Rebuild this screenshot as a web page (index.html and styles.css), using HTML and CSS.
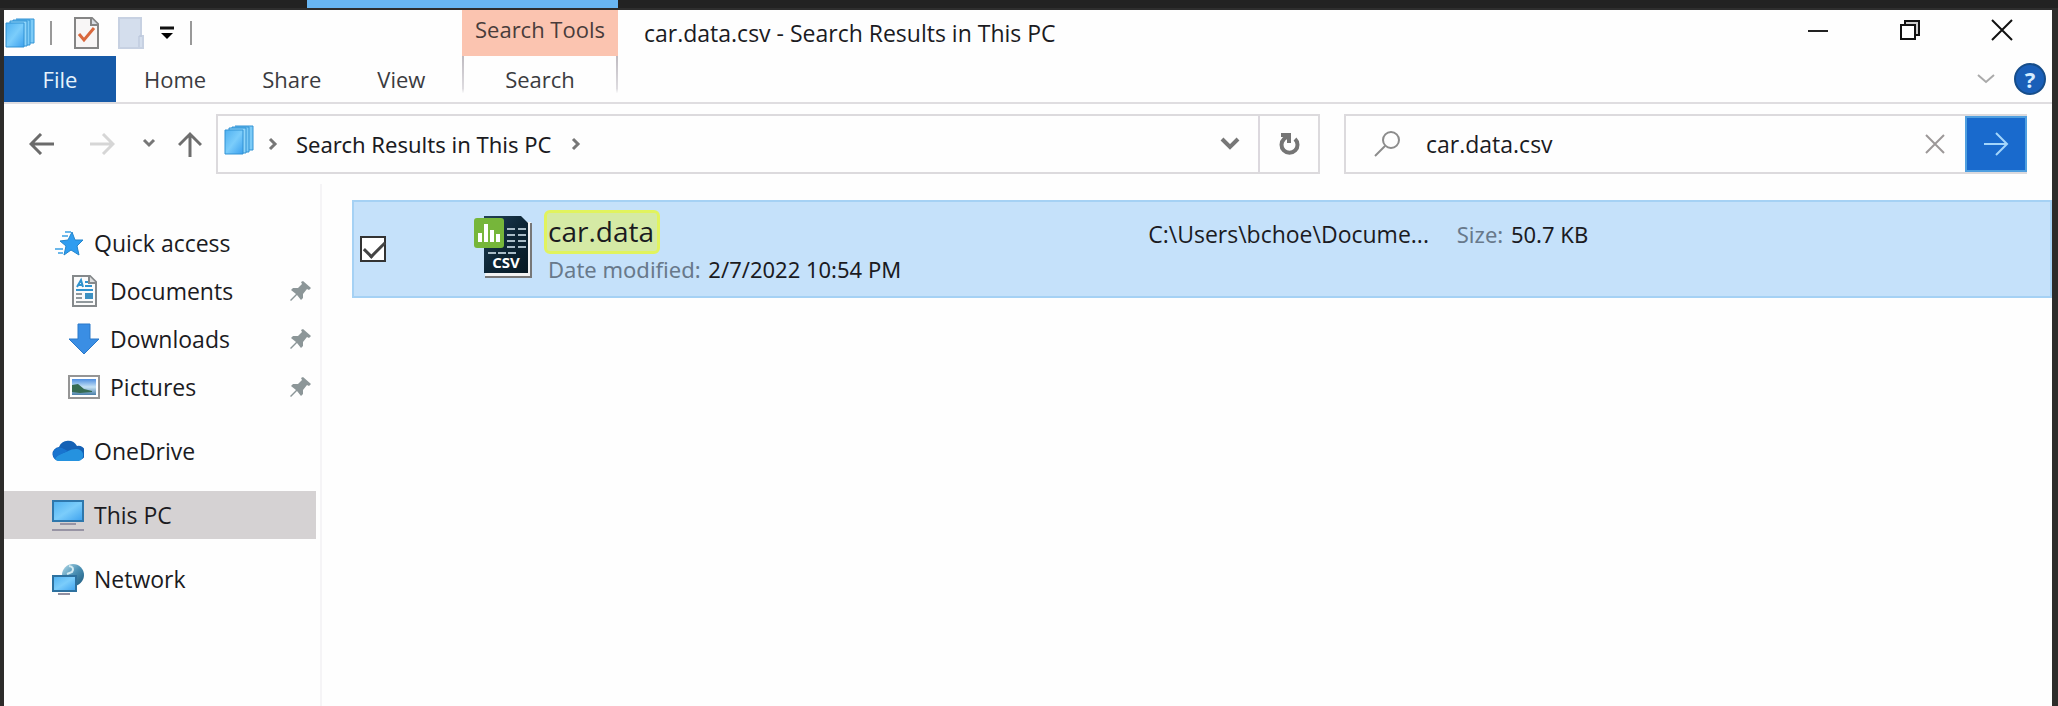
FILE: index.html
```html
<!DOCTYPE html>
<html lang="en">
<head>
<meta charset="utf-8">
<title>car.data.csv - Search Results in This PC</title>
<link rel="stylesheet" href="styles.css">
</head>
<body>
<svg class="defs" aria-hidden="true">
  <defs>
    <linearGradient id="sky" x1="0" y1="0" x2="1" y2="1"><stop offset="0" stop-color="#4fb0f0"/><stop offset=".5" stop-color="#7bcdfb"/><stop offset="1" stop-color="#3ba0ee"/></linearGradient>
    <linearGradient id="dark" x1="0" y1="0" x2="1" y2="1"><stop offset="0" stop-color="#21415a"/><stop offset=".5" stop-color="#0d2636"/><stop offset="1" stop-color="#071923"/></linearGradient>
    <linearGradient id="globe" x1="0" y1="0" x2="1" y2="1"><stop offset="0" stop-color="#b5dcea"/><stop offset=".5" stop-color="#4a90b4"/><stop offset="1" stop-color="#1c587c"/></linearGradient>
    <linearGradient id="photo" x1="0" y1="0" x2="0" y2="1"><stop offset="0" stop-color="#4d8ee0"/><stop offset=".5" stop-color="#c5e2f5"/><stop offset="1" stop-color="#4a7fa8"/></linearGradient>
    <symbol id="stack" viewBox="0 0 30 30">
      <path d="M11 1h18v24h-5" fill="#7ccbf7" stroke="#3393d4"/><path d="M8 2h17v25H8z" fill="#7ccbf7" stroke="#3393d4"/><path d="M5 3h17v25H5z" fill="#8fd5fa" stroke="#3393d4"/><path d="M1 5h18v24H1z" fill="url(#sky)" stroke="#3393d4"/>
    </symbol>
    <symbol id="pin" viewBox="0 0 22 22">
      <path d="M13 1l8 7-2 2-2-1-4 5v4l-2 2-4-5-6 6-1-1 6-6-5-4 2-2h5l4-4-1-2z" fill="#8c9698"/>
    </symbol>
  </defs>
</svg>
<div class="backdrop"><div class="backdrop-tab"></div></div>
<div class="window">
  <header class="ribbon">
    <div class="quick">
      <svg class="stack" width="30" height="30"><use href="#stack"/></svg>
      <span class="bar"></span>
      <button class="plain" aria-label="Properties"><svg width="25" height="32" viewBox="0 0 25 32"><path d="M1 1h17l6 6v24H1z" fill="#f8f6f6" stroke="#858585" stroke-width="2"/><path d="M17 1v7h7" fill="#d9dde4" stroke="#858585" stroke-width="2"/><path d="M5 17l5 6 10-12" fill="none" stroke="#d9683d" stroke-width="3"/></svg></button>
      <button class="plain page" aria-label="New folder"><svg width="26" height="32" viewBox="0 0 26 32"><path d="M1 1h22v18h2v12H1z" fill="#d4deed" stroke="#c7d1e2" stroke-width="2"/><path d="M21 30V19h3" fill="none" stroke="#b7c3d8"/></svg></button>
      <button class="plain" aria-label="Customize Quick Access Toolbar"><svg width="16" height="14" viewBox="0 0 16 14"><path d="M1 2h14" stroke="#111" stroke-width="3"/><path d="M2 7h12l-6 6z" fill="#000"/></svg></button>
      <span class="bar"></span>
    </div>
    <div class="context">Search Tools</div>
    <div class="titlebar">
      <h1>car.data.csv - Search Results in This PC</h1>
      <div class="controls">
        <button class="plain" aria-label="Minimize"><svg width="22" height="22" viewBox="0 0 22 22"><path d="M1 12h20" stroke="#222" stroke-width="2"/></svg></button>
        <button class="plain" aria-label="Restore"><svg width="22" height="22" viewBox="0 0 22 22" fill="none" stroke="#111" stroke-width="2"><path d="M6 6V2h14v14h-4" fill="#ccc"/><path d="M2 6h14v14H2z" fill="#fff"/></svg></button>
        <button class="plain" aria-label="Close"><svg width="22" height="22" viewBox="0 0 22 22"><path d="M1 1l20 20M21 1L1 21" stroke="#111" stroke-width="2"/></svg></button>
      </div>
    </div>
    <nav class="tabs" aria-label="Ribbon">
      <button class="tab file">File</button><button class="tab">Home</button><button class="tab">Share</button><button class="tab">View</button>
    </nav>
    <button class="tab search-tab">Search</button>
    <div class="ribbon-end">
      <button class="plain" aria-label="Expand the Ribbon"><svg width="18" height="12" viewBox="0 0 18 12"><path d="M1 2l8 7 8-7" fill="none" stroke="#aaa" stroke-width="2"/></svg></button>
      <button class="help" aria-label="Help">?</button>
    </div>
  </header>

  <div class="navbar">
    <button class="plain" aria-label="Back"><svg width="26" height="22" viewBox="0 0 26 22"><path d="M25 11H3M12 1L2 11l10 10" fill="none" stroke="#6b6b6b" stroke-width="3"/></svg></button>
    <button class="plain" aria-label="Forward"><svg width="26" height="22" viewBox="0 0 26 22"><path d="M1 11h22M14 1l10 10-10 10" fill="none" stroke="#d6d6d6" stroke-width="3"/></svg></button>
    <button class="plain recent" aria-label="Recent locations"><svg width="14" height="10" viewBox="0 0 14 10"><path d="M2 2l5 5 5-5" fill="none" stroke="#777" stroke-width="3"/></svg></button>
    <button class="plain up" aria-label="Up"><svg width="24" height="26" viewBox="0 0 24 26"><path d="M12 26V4M1 14L12 3l11 11" fill="none" stroke="#6e6e6e" stroke-width="3"/></svg></button>
    <div class="address">
      <svg class="stack" width="30" height="30"><use href="#stack"/></svg>
      <svg class="crumb-arrow" width="10" height="14" viewBox="0 0 10 14"><path d="M2 2l5 5-5 5" fill="none" stroke="#777" stroke-width="3"/></svg>
      <a class="crumb" href="#results">Search Results in This PC</a>
      <svg class="crumb-end" width="10" height="14" viewBox="0 0 10 14"><path d="M2 2l5 5-5 5" fill="none" stroke="#777" stroke-width="3"/></svg>
      <button class="plain history" aria-label="Previous locations"><svg width="20" height="14" viewBox="0 0 20 14"><path d="M2 2l8 8 8-8" fill="none" stroke="#777" stroke-width="4"/></svg></button>
      <button class="plain refresh" aria-label="Refresh"><svg width="22" height="24" viewBox="0 0 22 24"><path d="M17 7a8 8 0 1 1-11 0l4-3" fill="none" stroke="#757575" stroke-width="4"/><path d="M3 3h8v8" fill="none" stroke="#757575" stroke-width="4"/></svg></button>
    </div>
    <form class="search">
      <svg width="26" height="26" viewBox="0 0 26 26" fill="none" stroke="#8c8c8c" stroke-width="2"><circle cx="17" cy="9" r="8"/><path d="M11 15L1 25"/></svg>
      <input type="text" value="car.data.csv" aria-label="Search">
      <button type="reset" class="plain clear" aria-label="Clear"><svg width="20" height="20" viewBox="0 0 20 20"><path d="M1 1l18 18M19 1L1 19" stroke="#9c9898" stroke-width="2"/></svg></button>
      <button type="button" class="go" aria-label="Go"><svg width="26" height="24" viewBox="0 0 26 24"><path d="M1 12h22M13 1l11 11-11 11" fill="none" stroke="#a3d5fb" stroke-width="2"/></svg></button>
    </form>
  </div>

  <div class="body">
    <nav class="sidebar" aria-label="Navigation pane">
      <a href="#quick"><svg width="32" height="32" viewBox="0 0 32 32"><path d="M20 5l3 8h8l-6 6 2 9-8-5-7 5 2-9-6-5 8-1z" fill="#2f9df0" stroke="#2385cc"/><path d="M13 5h6M10 9h6M3 22h8M6 26h5" stroke="#6bb7ea" stroke-width="2"/></svg>Quick access</a>
      <a class="sub" href="#documents"><svg width="32" height="32" viewBox="0 0 32 32"><path d="M5 1h17l6 6v24H5z" fill="#fbfbfb" stroke="#85898b" stroke-width="2"/><path d="M21 1v7h7" fill="#ddd" stroke="#85898b" stroke-width="2"/><path d="M9 12l4-7 2 7M10 10h4M17 7h3M17 11h7M8 15h17" fill="none" stroke="#3193ce" stroke-width="2"/><path d="M8 19h6M8 23h6M8 27h17" stroke="#91999d" stroke-width="2"/><path d="M17 18h8v6h-8z" fill="#3d91c2"/></svg>Documents<svg class="pin" width="22" height="22"><use href="#pin"/></svg></a>
      <a class="sub" href="#downloads"><svg width="32" height="32" viewBox="0 0 32 32"><path d="M10 1h12v15h9L16 31 1 16h9z" fill="#3a8ee4" stroke="#2a78c9"/></svg>Downloads<svg class="pin" width="22" height="22"><use href="#pin"/></svg></a>
      <a class="sub" href="#pictures"><svg width="32" height="32" viewBox="0 0 32 32"><path d="M1 5h30v22H1z" fill="#fff" stroke="#959595" stroke-width="2"/><path d="M4 8h24v16H4z" fill="url(#photo)"/><path d="M4 14l6-1 6 5 8 2v1l-12 1-8-1z" fill="#366b52"/></svg>Pictures<svg class="pin" width="22" height="22"><use href="#pin"/></svg></a>
      <a class="root" href="#onedrive"><svg width="32" height="32" viewBox="0 0 32 32"><path d="M8 26a7 7 0 0 1-1-14 10 10 0 0 1 18-1 7 7 0 0 1 3 14z" fill="#1461b5"/><path d="M3 24c2-5 7-5 13-8 4-2 9-3 12-1a6 6 0 0 1-1 11H8q-4 0-5-2z" fill="#2592df"/><path d="M1 18a7 7 0 0 1 9-5l6 3C10 19 5 20 3 24q-2-2-2-6z" fill="#1874cf"/></svg>OneDrive</a>
      <a class="root selected" href="#pc" aria-current="page"><svg width="32" height="32" viewBox="0 0 32 32"><path d="M1 2h30v20H1z" fill="url(#sky)" stroke="#2e77ac" stroke-width="2"/><path d="M8 25h16M0 31h32" stroke="#9894a4" stroke-width="2"/></svg>This PC</a>
      <a class="root" href="#network"><svg width="32" height="32" viewBox="0 0 32 32"><circle cx="21" cy="12" r="11" fill="url(#globe)"/><path d="M17 3q6 1 3 6l-5 2" stroke="#d3ebf2" stroke-width="2" fill="none"/><path d="M1 13h23v15H1z" fill="url(#sky)" stroke="#2d719f" stroke-width="2"/><path d="M6 31h12" stroke="#918fa0" stroke-width="2"/></svg>Network</a>
    </nav>
    <main class="results" id="results">
      <div class="item">
        <input type="checkbox" class="check" checked aria-label="Select car.data">
        <svg class="csv" width="60" height="64" viewBox="0 0 60 64"><path d="M16 7h42v55H12" fill="#f3f3f3"/><path d="M58 8v54H12" fill="none" stroke="#777" stroke-width="2"/><path d="M11 1h37l7 7v50H11z" fill="url(#dark)"/><path d="M34 14h8M45 14h8M34 20h8M45 20h8M34 26h8M45 26h8M34 32h8M45 32h8M15 38h8M25 38h8M35 38h8" stroke="#a9bcc7" stroke-width="2"/><rect x="1" y="3" width="30" height="30" rx="3" fill="#76b63a"/><path d="M7 27v-9M13 27V9M19 27V15M25 27v-8" stroke="#fff" stroke-width="4"/><text x="33" y="53" text-anchor="middle" class="csv-label">CSV</text></svg>
        <div class="info">
          <div class="name"><mark>car.data</mark></div>
          <div><span class="label">Date modified:</span> 2/7/2022 10:54 PM</div>
        </div>
        <div class="path">C:\Users\bchoe\Docume...</div>
        <div class="size"><span class="label">Size:</span> 50.7 KB</div>
      </div>
    </main>
  </div>
</div>
</body>
</html>
```

FILE: styles.css
```css
* { box-sizing: border-box; }
body {
  margin: 0;
  min-height: 100vh;
  display: flex;
  flex-direction: column;
  background: #2d2c2a;
  color: #1b1b1f;
  font: 22px/32px "Noto Sans", "Open Sans", sans-serif;
}
button, input { font: inherit; color: inherit; }
svg { display: block; flex: none; }
.defs { position: absolute; width: 0; height: 0; }
.plain {
  display: flex;
  align-items: center;
  justify-content: center;
  border: 0;
  padding: 0;
  background: none;
}
.backdrop { height: 10px; background: #222; border-bottom: 2px solid #2e2e2e; }
.backdrop-tab { width: 311px; height: 8px; margin-left: 307px; background: #68b6f3; }
.window {
  flex: 1;
  display: flex;
  flex-direction: column;
  margin: 0 6px 0 4px;
  background: #fefefe;
}

.ribbon {
  display: grid;
  grid-template-columns: 458px 156px 1fr;
  grid-template-rows: 46px 46px;
  border-bottom: 2px solid #dfdde0;
}
.quick { display: flex; align-items: center; padding-left: 1px; }
.quick .stack { margin-right: 15px; }
.bar { width: 2px; height: 24px; margin-right: 22px; background: #999; }
.quick .page { margin: 0 15px 0 19px; }
.quick .plain + .bar { margin-left: 15px; }
.context {
  display: flex;
  justify-content: center;
  align-items: center;
  padding-bottom: 8px;
  background: #fbc4b0;
  color: #493c3b;
  font-family: "Open Sans", "Noto Sans", sans-serif;
}
.titlebar { display: flex; justify-content: space-between; padding: 0 4px 0 26px; }
h1 { margin: 0; font: 23px/46px "Open Sans", "Noto Sans", sans-serif; }
.controls { display: flex; }
.controls .plain { width: 92px; height: 40px; }
.tabs { display: flex; }
.tab {
  border: 0;
  padding: 0 28px;
  background: none;
  color: #3b3b40;
  font-family: "Open Sans", "Noto Sans", sans-serif;
}
.file { width: 112px; background: #165aa8; color: #e6f3fc; }
.search-tab {
  border: solid;
  border-width: 0 2px;
  border-image: linear-gradient(#bdb9bf, #dedce0 70%, transparent 80%) 1;
}
.ribbon-end { display: flex; justify-content: flex-end; align-items: center; gap: 19px; padding-right: 6px; }
.help {
  width: 32px;
  height: 32px;
  border: 2px solid #164d8a;
  border-radius: 50%;
  padding: 0;
  background: #1a5fb8;
  color: #d5ecff;
  font-weight: 700;
  line-height: 28px;
}

.navbar {
  display: grid;
  grid-template-columns: 60px 60px 34px 50px minmax(0, 1128fr) minmax(0, 683fr);
  height: 80px;
  padding: 10px 25px 10px 8px;
}
.recent { padding-bottom: 2px; }
.up { padding-right: 2px; }
.address, .search { display: flex; align-items: center; border: 2px solid #dcdadd; }
.address { margin-right: 24px; padding-left: 6px; }
.address .stack { margin-bottom: 8px; }
.crumb-arrow { margin: 0 18px 0 14px; }
.crumb { color: inherit; text-decoration: none; }
.crumb-end { margin-left: 20px; }
.history { margin-left: auto; width: 56px; height: 100%; }
.refresh { width: 60px; height: 100%; border-left: 2px solid #dcd8de; }
.search { padding-left: 28px; border-right: 0; }
.search input {
  flex: 1;
  min-width: 0;
  margin-left: 26px;
  border: 0;
  padding: 0;
  outline: 0;
  background: none;
  font: 23px/32px "Open Sans", "Noto Sans", sans-serif;
}
.clear { width: 60px; height: 100%; }
.go {
  display: flex;
  align-items: center;
  justify-content: center;
  align-self: stretch;
  width: 62px;
  border: 2px solid #4f9fe0;
  padding: 0;
  background: #196acd;
}

.body { flex: 1; display: flex; }
.sidebar {
  width: 318px;
  padding: 35px 4px 35px 0;
  border-right: 2px solid #f5f4f6;
  font: 23px/32px "Open Sans", "Noto Sans", sans-serif;
}
.sidebar a {
  display: flex;
  align-items: center;
  gap: 10px;
  height: 48px;
  padding-left: 48px;
  color: inherit;
  text-decoration: none;
}
.sidebar .sub { padding: 0 4px 0 64px; }
.sidebar .root { margin-top: 16px; }
.sidebar .selected { background: #d5d2d3; }
.pin { margin-left: auto; }
.results { flex: 1; padding: 16px 0 0 30px; }
.item {
  display: grid;
  grid-template-columns: 113px 71px 605fr 309fr 594fr;
  height: 98px;
  padding-left: 6px;
  border: 2px solid #a5d1f4;
  background: #c5e1fa;
}
.check {
  appearance: none;
  align-self: center;
  width: 26px;
  height: 26px;
  margin: 0;
  border: 2px solid #333;
  background: #fff;
}
.check:checked::before {
  content: "";
  display: block;
  width: 18px;
  height: 9px;
  margin: 3px 2px;
  border: solid #444;
  border-width: 0 0 3px 3px;
  rotate: -45deg;
}
.csv { margin-top: 13px; }
.csv-label { font: 700 15px "Open Sans", sans-serif; fill: #fff; }
.info { padding: 8px 0 0 4px; }
.name { height: 43px; font: 28px/36px "Open Sans", "Noto Sans", sans-serif; }
mark {
  display: inline-block;
  margin-left: -4px;
  border: 3px solid #e1f35e;
  border-radius: 6px;
  padding: 0 3px 2px 1px;
  background: #d5eaa5;
  color: inherit;
}
.label { color: #68798b; margin-right: 2px; }
.path, .size { padding-top: 16px; white-space: nowrap; }
.path { font: 23px/32px "Open Sans", "Noto Sans", sans-serif; }
```
